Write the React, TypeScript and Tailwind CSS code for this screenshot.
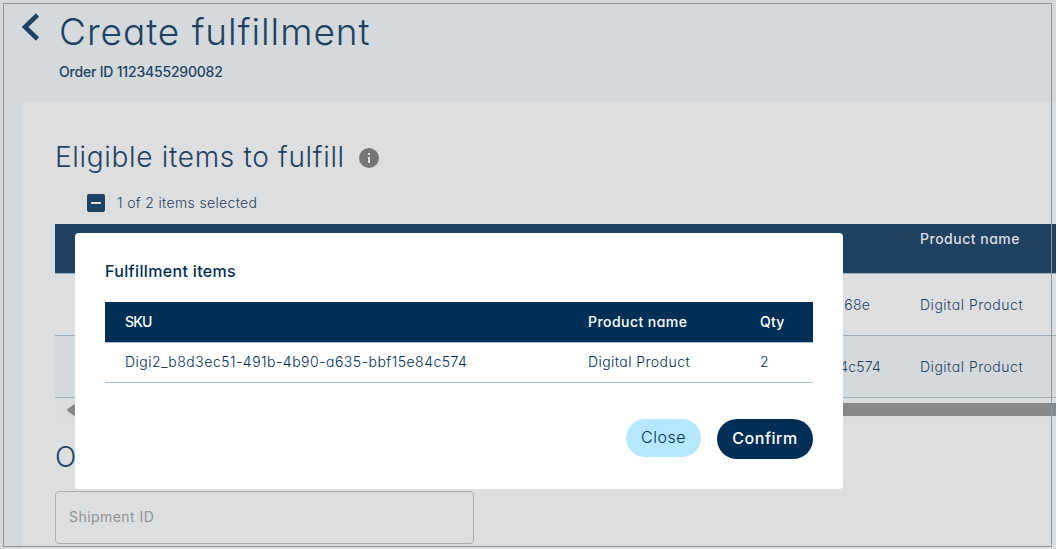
import React from "react";

const eligibleItems = [
  { skuEnd: "68e", name: "Digital Product", tone: "bg-[#dddee0]", pad: "pr-[11px]" },
  { skuEnd: "4c574", name: "Digital Product", tone: "bg-[#d4d9dc]", pad: "pr-0" },
];

function PageHeader() {
  return (
    <header className="flex h-[102px] shrink-0 pl-[22px]">
      <svg className="mt-[13px] h-[28px] w-[18px] shrink-0" viewBox="0 0 18 28" fill="none">
        <path d="M15.5 2 L3 14 L15.5 26" stroke="#1f4263" strokeWidth="4.6" />
      </svg>
      <div className="pl-[19px]">
        <h1 className="mt-[10px] h-[44px] text-[37px] leading-[44px] font-light tracking-[0.96px]">Create fulfillment</h1>
        <p className="mt-[8px] text-[14px] leading-[20px] font-medium tracking-[-0.2px]">Order ID 1123455290082</p>
      </div>
    </header>
  );
}

function EligibleTable() {
  return (
    <div className="mt-[12px] w-full">
      <div className="flex h-[50px] border-b border-[#9eaeb8] bg-[#1f4263] text-[14px] leading-[20px] font-medium text-[#dddee0]">
        <div className="w-[865px] shrink-0" />
        <div className="pt-[5px] tracking-[0.5px] whitespace-nowrap">Product name</div>
      </div>
      {eligibleItems.map((item) => (
        <div
          key={item.skuEnd}
          className={`flex h-[62px] items-center border-b border-[#9eaeb8] text-[14px] font-light ${item.tone}`}
        >
          <div className={`w-[826px] shrink-0 text-right tracking-[0.2px] ${item.pad}`}>{item.skuEnd}</div>
          <div className="pl-[39px] tracking-[0.52px] whitespace-nowrap">{item.name}</div>
        </div>
      ))}
      <div className="flex h-[24px] items-center bg-[#dbdcde] pb-[1px] pl-[12px]">
        <svg className="h-[14px] w-[9px]" viewBox="0 0 9 14">
          <path d="M9 0 L1 5.5 Q-.5 7 1 8.5 L9 14 Z" fill="#87888a" />
        </svg>
        <div className="h-[13px] flex-1 bg-[#87888a]" />
      </div>
    </div>
  );
}

function FulfillmentDialog() {
  return (
    <section className="absolute top-[233px] left-[75px] flex h-[256px] w-[768px] flex-col rounded-[4px] bg-white px-[30px] text-[#002f56]">
      <h3 className="mt-[26px] h-[24px] text-[16px] leading-[24px] font-medium tracking-[0.34px]">Fulfillment items</h3>
      <div className="mt-[19px] text-[14px]">
        <div className="flex h-[41px] items-center border-b border-[#aebdca] bg-[#002f56] pb-[2px] pl-[20px] font-medium text-white">
          <span className="w-[463px] tracking-[-0.8px]">SKU</span>
          <span className="w-[172px] tracking-[0.45px]">Product name</span>
          <span className="tracking-[0.2px]">Qty</span>
        </div>
        <div className="flex h-[40px] items-center border-b border-[#aebdca] pb-[2px] pl-[20px] font-light">
          <span className="w-[463px] tracking-[0.5px]">Digi2_b8d3ec51-491b-4b90-a635-bbf15e84c574</span>
          <span className="w-[172px] tracking-[0.45px]">Digital Product</span>
          <span>2</span>
        </div>
      </div>
      <div className="mt-[36px] flex items-start justify-end gap-[16px] text-[16px]">
        <button className="h-[38px] w-[75px] rounded-full bg-[#b5e8fc] pb-[2px] font-light tracking-[0.5px]">Close</button>
        <button className="h-[40px] w-[96px] rounded-full bg-[#002f56] pb-[2px] font-medium tracking-[0.5px] text-white">Confirm</button>
      </div>
    </section>
  );
}

export default function App() {
  return (
    <div className="relative flex h-[549px] w-[1056px] flex-col overflow-hidden bg-[#d4d9dc] font-['Inter','Noto_Sans',sans-serif] text-[#1f4263] [font-feature-settings:'cv11']">
      <PageHeader />
      <main className="ml-[23px] flex-1 rounded-tl-[4px] bg-[#dddee0] pt-[35px] pl-[32px]">
        <div className="flex h-[40px] items-center">
          <h2 className="text-[28px] leading-[40px] font-light tracking-[0.68px] whitespace-nowrap">Eligible items to fulfill</h2>
          <svg className="mt-[2px] ml-[14px] h-[20px] w-[20px]" viewBox="0 0 20 20">
            <circle cx="10" cy="10" r="10" fill="#757678" />
            <path d="M9 5h2v2H9zM9 9h2v6H9z" fill="#dddee0" />
          </svg>
        </div>
        <div className="mt-[17px] flex h-[18px] items-center pl-[32px]">
          <span className="flex h-[18px] w-[18px] items-center justify-center rounded-[2px] bg-[#1f4263]">
            <span className="h-[2px] w-[10px] bg-[#dddee0]" />
          </span>
          <span className="pb-[2px] pl-[12px] text-[14px] font-light tracking-[0.35px]">1 of 2 items selected</span>
        </div>
        <EligibleTable />
        <h2 className="mt-[15px] h-[40px] text-[28px] leading-[40px] font-light">O</h2>
        <div className="mt-[14px] flex h-[53px] w-[419px] items-center rounded-[4px] border border-[#adaeb0] pb-[2px] pl-[13px] text-[14px] tracking-[0.45px] text-[#919294]">
          Shipment ID
        </div>
      </main>
      <div className="pointer-events-none absolute top-[3px] left-[3px] h-[544px] w-[1049px] border border-[#919699]" />
      <FulfillmentDialog />
    </div>
  );
}
